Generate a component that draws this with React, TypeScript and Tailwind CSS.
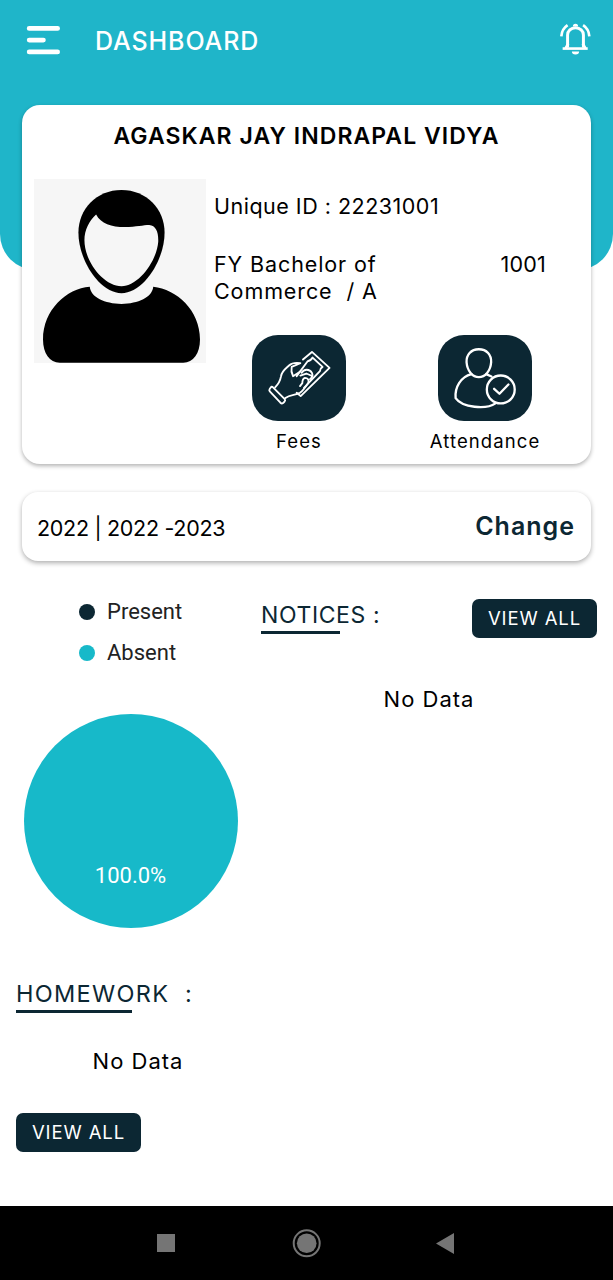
import type { ReactNode } from "react";

function MenuIcon() {
  return (
    <svg className="-mt-px h-[30px] w-[34px]" viewBox="0 0 34 30" stroke="#fff" strokeWidth="4.8" strokeLinecap="round">
      <path d="M3.2 3.4H31.6M3.2 15.1H17.4M3.2 26.9H31.6" />
    </svg>
  );
}

function BellIcon() {
  return (
    <svg className="-mt-[3px] h-8 w-[31px]" viewBox="180 70 94 96" fill="none" stroke="#fff" strokeWidth="8">
      <path d="M203 144V106C203 94 213 84 227 84S251 94 251 106V144" strokeWidth="9" />
      <path d="M188 147H264" strokeWidth="8" />
      <path d="M197 146L205 132M257 146L249 132" />
      <path d="M219 80A8 8 0 0 1 235 80ZM216 156H238A11 9 0 0 1 216 156Z" fill="#fff" stroke="none" />
      <path d="M184 110C185 95 191 84 203 76M269 110C268 95 262 84 250 76" />
    </svg>
  );
}

function Avatar() {
  return (
    <svg className="h-[184px] w-[172px] shrink-0 bg-[#f6f6f6]" viewBox="103 27 515 551" preserveAspectRatio="none">
      <path d="M365 60C440 60 494 117 494 188C494 270 430 369 365 369C300 369 236 270 236 188C236 117 290 60 365 60Z" />
      <path
        fill="#f6f6f6"
        d="M289 133C303 160 335 171 375 171C410 171 430 165 448 165C468 167 476 185 475 215C470 275 415 348 365 348C312 348 254 275 254 210C254 180 268 152 289 133Z"
      />
      <path d="M270 350C273 382 315 401 365 401C415 401 457 382 460 350C530 358 600 420 600 508C600 550 580 577 550 577H180C150 577 130 550 130 508C130 420 200 355 270 350Z" />
    </svg>
  );
}

function FeesIcon() {
  return (
    <svg className="h-full w-full" viewBox="35 29 280 259" fill="none" stroke="#fff" strokeWidth="5.6" strokeLinejoin="round" strokeLinecap="round">
      <path d="M96 186L132 222Q135 226 131 230L127 234Q123 237 119 233L87 199Q84 195 87 191L90 187Q93 183 96 186Z" />
      <path d="M103 187C116 174 119 164 121 153C123 138 133 132 145 121C155 112 166 112 179 114L153 125C151 134 152 143 157 153L179 139" />
      <path d="M134 219C148 208 164 211 178 203C188 196 195 185 203 173C206 164 201 158 193 158C187 160 185 167 185 174L178 183" />
      <path d="M187 103L214 80L267 128L180 213L168 203" />
      <path d="M168 153L201 108Q210 107 216 97L246 125Q238 130 238 138L190 188" />
      <path d="M183 143C190 130 207 131 214 143C217 150 214 158 208 162M179 151L197 145L211 151" />
    </svg>
  );
}

function AttendanceIcon() {
  return (
    <svg className="h-full w-full" viewBox="54 29 281 259" fill="none" stroke="#fff" strokeWidth="7" strokeLinejoin="round" strokeLinecap="round">
      <path d="M176 72C200 72 214 89 213 111C211 137 195 156 176 156C157 156 141 137 139 111C138 89 152 72 176 72Z" />
      <path d="M154 147C121 155 103 187 106 219C126 248 198 254 226 235M198 147L214 154" />
      <circle cx="242" cy="193" r="42" />
      <path d="M222 191L238 206L265 178" />
    </svg>
  );
}

function Tile({ label, children }: { label: string; children: ReactNode }) {
  return (
    <div className="flex w-[130px] flex-col items-center">
      <div className="h-[86px] w-[94px] overflow-hidden rounded-[26px] bg-[#0c2733]">{children}</div>
      <span className="mt-[7px] whitespace-nowrap text-[18.5px] leading-[26px] tracking-[1.1px]">{label}</span>
    </div>
  );
}

function ViewAll() {
  return (
    <button className="flex h-[39px] w-[125px] items-center justify-center rounded-[7px] bg-[#0c2733] pt-px text-[18.5px] tracking-[0.9px] whitespace-nowrap text-white">
      VIEW ALL
    </button>
  );
}

function Legend({ dot, label }: { dot: string; label: string }) {
  return (
    <div className="flex h-[41px] items-center gap-3">
      <span className={`size-4 rounded-full ${dot}`} />
      <span className="font-[Roboto,sans-serif] text-[22px] text-[#222]">{label}</span>
    </div>
  );
}

export default function App() {
  return (
    <div className="flex h-[1280px] w-[613px] flex-col overflow-hidden bg-white font-[Inter,sans-serif] text-black">
      <header className="h-[270px] shrink-0 rounded-b-[36px] bg-[#1fb5c9]">
        <div className="flex h-20 items-center pr-[22px] pl-[26px]">
          <MenuIcon />
          <h1 className="ml-[35px] flex-1 pt-[3px] text-[25px] font-medium tracking-[0.9px] text-white">DASHBOARD</h1>
          <BellIcon />
        </div>
      </header>

      <main className="relative -mt-[165px] flex flex-1 flex-col">
        <section className="mx-[22px] h-[359px] rounded-[18px] bg-white px-3 shadow-[0_2px_4px_rgba(0,0,0,0.3)]">
          <h2 className="pt-[15px] text-center text-[23px] leading-[32px] font-semibold tracking-[1.06px] whitespace-nowrap">AGASKAR JAY INDRAPAL VIDYA</h2>
          <div className="mt-[27px] flex">
            <Avatar />
            <div className="flex flex-1 flex-col pt-[14px] pl-2 text-[21.5px] leading-[27px]">
              <p className="tracking-[0.5px] whitespace-nowrap">Unique ID : 22231001</p>
              <div className="mt-[31px] flex justify-between pr-[33px]">
                <p className="tracking-[0.9px] whitespace-pre">{"FY Bachelor of\nCommerce  / A"}</p>
                <p className="tracking-[0.2px]">1001</p>
              </div>
              <div className="-mr-4 mt-[30px] -ml-[7px] flex gap-14 pl-[27px]">
                <Tile label="Fees"><FeesIcon /></Tile>
                <Tile label="Attendance"><AttendanceIcon /></Tile>
              </div>
            </div>
          </div>
        </section>

        <section className="mx-[22px] mt-7 flex h-[69px] shrink-0 items-center justify-between rounded-[16px] bg-white pr-4 pl-[15px] shadow-[0_2px_5px_rgba(0,0,0,0.32)]">
          <span className="pt-[3px] text-[21.5px] tracking-[-0.3px]">2022 | 2022 -2023</span>
          <button className="text-[25px] font-semibold tracking-[1px] text-[#0c2733]">Change</button>
        </section>

        <section className="mt-[30px] flex h-[377px] shrink-0">
          <div className="w-[261px]">
            <div className="pl-[79px]">
              <Legend dot="bg-[#0c2733]" label="Present" />
              <Legend dot="bg-[#17b9c9]" label="Absent" />
            </div>
            <div className="mt-[41px] ml-[23.5px] flex size-[214px] justify-center rounded-full bg-[#17b9c9] pt-[149px] font-[Roboto,sans-serif] text-[22px] leading-[26px] text-white">
              100.0%
            </div>
          </div>
          <div className="flex-1 pt-2 pr-[16px]">
            <div className="flex justify-between">
              <div>
                <h3 className="text-[23px] leading-[32px] tracking-[0.6px] whitespace-nowrap text-[#0c2733]">NOTICES :</h3>
                <div className="h-[3px] w-[79px] bg-[#0c2733]" />
              </div>
              <ViewAll />
            </div>
            <p className="mt-[46px] text-center text-[22px] leading-[30px] tracking-[1px]">No Data</p>
          </div>
        </section>

        <section className="mt-[10px] pl-4">
          <h3 className="text-[23.5px] leading-[32px] tracking-[1.3px] whitespace-pre text-[#0c2733]">{"HOMEWORK  :"}</h3>
          <div className="h-[3px] w-[116px] bg-[#0c2733]" />
          <p className="mt-[33px] mb-[37px] w-[244px] text-center text-[22px] leading-[30px] tracking-[1px]">No Data</p>
          <ViewAll />
        </section>
      </main>

      <nav className="flex h-[74px] shrink-0 items-center bg-black">
        <svg className="h-[74px] w-[613px]" viewBox="0 0 613 74" fill="#757575">
          <path d="M157 28H175V46H157ZM454 27V48L436 37.5Z" />
          <circle cx="306.7" cy="37.3" r="9.8" />
          <circle cx="306.7" cy="37.3" r="13" fill="none" stroke="#757575" strokeWidth="2" />
        </svg>
      </nav>
    </div>
  );
}
